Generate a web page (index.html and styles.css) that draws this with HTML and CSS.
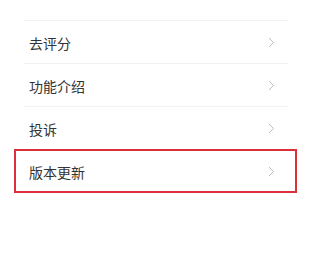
FILE: index.html
```html
<!DOCTYPE html>
<html lang="zh-CN">
<head>
<meta charset="utf-8">
<link rel="stylesheet" href="styles.css">
</head>
<body>
<ul class="menu">
  <li class="menu-item"><span class="label">去评分</span><svg class="chev" width="7" height="11" viewBox="0 0 7 11"><polyline points="1,1 5.5,5.5 1,10" fill="none" stroke="#bdbdbd" stroke-width="1"/></svg></li>
  <li class="menu-item"><span class="label">功能介绍</span><svg class="chev" width="7" height="11" viewBox="0 0 7 11"><polyline points="1,1 5.5,5.5 1,10" fill="none" stroke="#bdbdbd" stroke-width="1"/></svg></li>
  <li class="menu-item"><span class="label">投诉</span><svg class="chev" width="7" height="11" viewBox="0 0 7 11"><polyline points="1,1 5.5,5.5 1,10" fill="none" stroke="#bdbdbd" stroke-width="1"/></svg></li>
  <li class="menu-item highlighted"><span class="label">版本更新</span><svg class="chev" width="7" height="11" viewBox="0 0 7 11"><polyline points="1,1 5.5,5.5 1,10" fill="none" stroke="#bdbdbd" stroke-width="1"/></svg></li>
</ul>
</body>
</html>
```
FILE: styles.css
```css
html, body {
  margin: 0;
  padding: 0;
  background: #ffffff;
}
body {
  font-family: "Noto Sans CJK SC", "Noto Sans", sans-serif;
  color: #333333;
  width: 316px;
  height: 273px;
  overflow: hidden;
}
.menu {
  list-style: none;
  margin: 0 28px 0 24px;
  padding: 21px 0 0 0;
  border-top: none;
}
.menu::before {
  content: "";
  display: block;
  height: 1px;
  background: #f2f2f2;
  margin-top: -1px;
}
.menu-item {
  position: relative;
  display: flex;
  align-items: center;
  justify-content: space-between;
  height: 42px;
  padding: 0 13px 0 5px;
  border-bottom: 1px solid #f2f2f2;
  font-size: 14px;
}
.menu-item .label {
  line-height: 20px;
  padding-top: 2px;
}
.chev {
  display: block;
}
.highlighted {
  border-bottom-color: transparent;
}
.highlighted::after {
  content: "";
  position: absolute;
  left: -10px;
  right: -9px;
  top: -1px;
  bottom: -1px;
  border: 2px solid #d9303b;
}
```
